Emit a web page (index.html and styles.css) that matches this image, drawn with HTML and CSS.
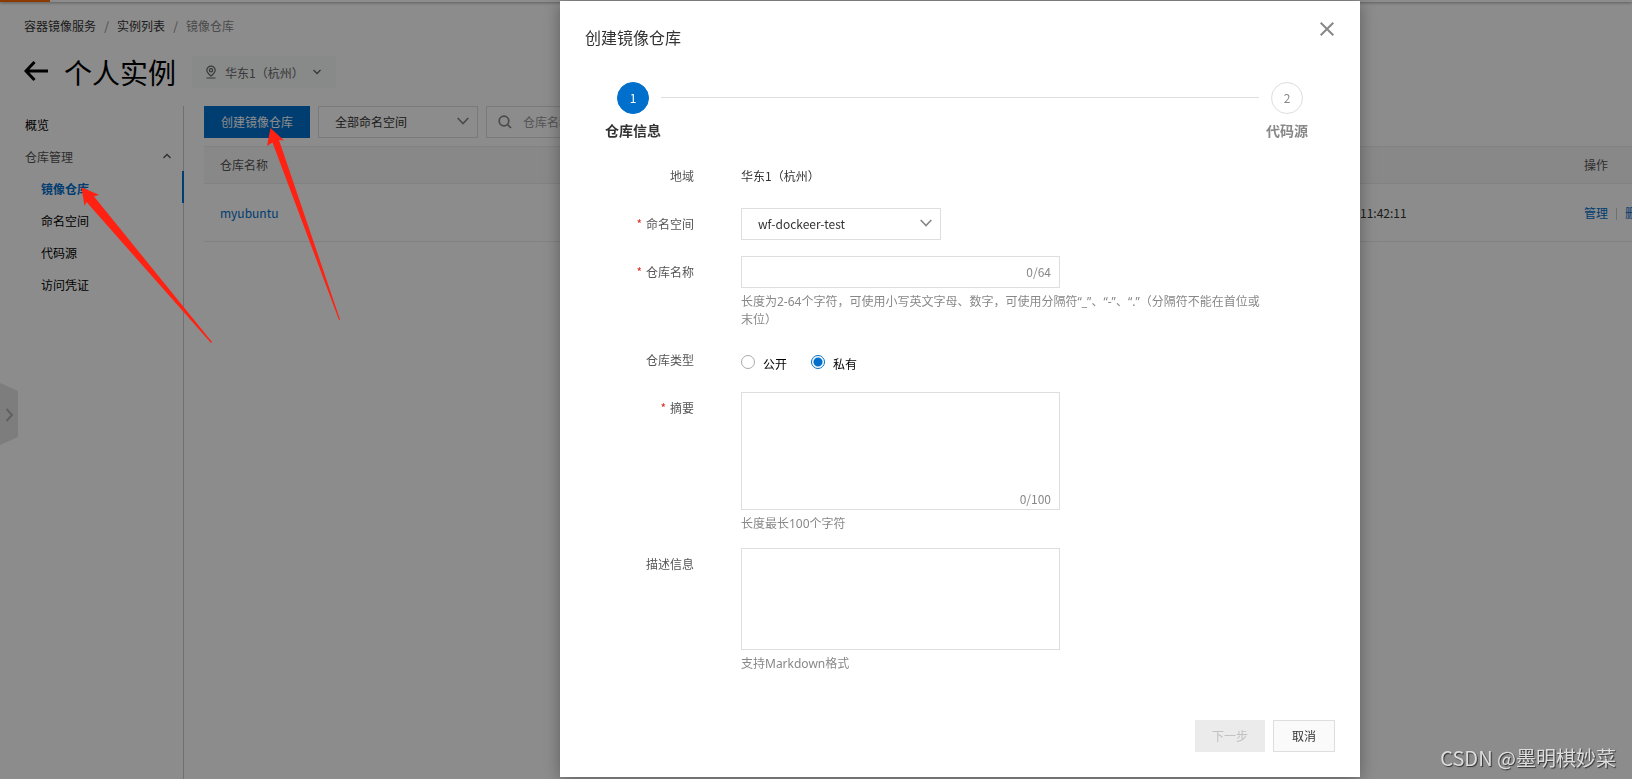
FILE: index.html
```html
<!DOCTYPE html>
<html lang="zh-CN">
<head>
<meta charset="utf-8">
<title>容器镜像服务</title>
<link rel="stylesheet" href="styles.css">
</head>
<body>
<div class="page">
  <div class="topbar"><span class="topbar-accent"></span></div>
  <header class="page-header">
    <nav class="breadcrumb" aria-label="路径">
      <a href="#">容器镜像服务</a><span class="slash">/</span><a href="#">实例列表</a><span class="slash">/</span><span class="current">镜像仓库</span>
    </nav>
    <div class="title-row">
      <a class="back" href="#" aria-label="返回">
        <svg width="24" height="22" viewBox="0 0 24 22" fill="none" stroke="currentColor" stroke-width="3"><path d="M10.500 1L2 10L10.500 19M2 10H24"/></svg>
      </a>
      <h1>个人实例</h1>
      <button class="region" type="button">
        <svg width="12" height="14" viewBox="0 0 12 14" fill="none" stroke="currentColor" stroke-width="1.200"><path d="M6 11C3 8.500 1.800 7.300 1.800 5.300a4.200 4.200 0 0 1 8.400 0C10.200 7.300 9 8.500 6 11zM1.500 13h9"/><circle cx="6" cy="5.300" r="1.600"/></svg>
        <span>华东1（杭州）</span>
        <svg class="region-arrow" width="8" height="6" viewBox="0 0 8 6" fill="none" stroke="currentColor" stroke-width="1.300"><path d="M.5 1L4 4.500L7.500 1"/></svg>
      </button>
    </div>
  </header>
  <div class="body">
    <aside class="sidebar">
      <a class="item strong" href="#">概览</a>
      <button class="item group" type="button">仓库管理
        <svg width="8" height="8" viewBox="0 0 8 8" fill="none" stroke="currentColor" stroke-width="1.300"><path d="M.5 5L4 1.500L7.500 5"/></svg>
      </button>
      <a class="item sub active" href="#">镜像仓库</a>
      <a class="item sub" href="#">命名空间</a>
      <a class="item sub" href="#">代码源</a>
      <a class="item sub" href="#">访问凭证</a>
    </aside>
    <main class="main">
      <div class="toolbar">
        <button class="btn primary" type="button">创建镜像仓库</button>
        <div class="select filter">
          <select aria-label="命名空间筛选"><option>全部命名空间</option></select>
          <svg width="12" height="8" viewBox="0 0 12 8" fill="none" stroke="currentColor" stroke-width="1.700"><path d="M.7 1L6 6.500L11.300 1"/></svg>
        </div>
        <label class="search">
          <svg width="14" height="14" viewBox="0 0 14 14" fill="none" stroke="currentColor" stroke-width="1.700"><circle cx="6" cy="6" r="4.800"/><path d="M9.500 9.500L13 13"/></svg>
          <input type="text" placeholder="仓库名称" aria-label="仓库名称">
        </label>
      </div>
      <table class="repos">
        <colgroup><col><col class="col-time"><col class="col-op"></colgroup>
        <thead><tr><th>仓库名称</th><th></th><th>操作</th></tr></thead>
        <tbody><tr><td><a href="#">myubuntu</a></td><td class="time">11:42:11</td><td class="ops"><a href="#">管理</a><span class="bar"></span><a href="#">删除</a></td></tr></tbody>
      </table>
    </main>
  </div>
  <svg class="handle" width="18" height="62" viewBox="0 0 18 62"><path d="M0 0L18 8V54L0 62z" fill="#e3e3e3"/><path d="M6.500 26L12 32L6.500 38" fill="none" stroke="#b0b0b0" stroke-width="2"/></svg>
</div>

<div class="overlay">
  <form class="dialog" role="dialog" aria-labelledby="dialog-title">
    <div class="dialog-head">
      <h2 id="dialog-title">创建镜像仓库</h2>
      <button class="close" type="button" aria-label="关闭">
        <svg width="14" height="14" viewBox="0 0 14 14" fill="none" stroke="currentColor" stroke-width="2"><path d="M.7 .7L13.300 13.300M13.300 .7L.7 13.300"/></svg>
      </button>
    </div>
    <div class="steps">
      <div class="step on"><span class="num">1</span><span class="step-name">仓库信息</span></div>
      <span class="step-line"></span>
      <div class="step"><span class="num">2</span><span class="step-name">代码源</span></div>
    </div>
    <div class="fields">
      <span class="label">地域</span>
      <div class="value">华东1（杭州）</div>

      <label class="label required" for="ns">命名空间</label>
      <div class="select ns">
        <select id="ns"><option>wf-dockeer-test</option></select>
        <svg width="12" height="8" viewBox="0 0 12 8" fill="none" stroke="currentColor" stroke-width="1.700"><path d="M.7 1L6 6.500L11.300 1"/></svg>
      </div>

      <label class="label required" for="name">仓库名称</label>
      <div>
        <div class="counted"><input id="name" type="text"><span class="count">0/64</span></div>
        <p class="help">长度为2-64个字符，可使用小写英文字母、数字，可使用分隔符“_”、“-”、“.”（分隔符不能在首位或末位）</p>
      </div>

      <span class="label">仓库类型</span>
      <div class="radios">
        <label><input type="radio" name="type">公开</label>
        <label><input type="radio" name="type" checked>私有</label>
      </div>

      <label class="label required" for="summary">摘要</label>
      <div>
        <div class="counted"><textarea id="summary" class="tall"></textarea><span class="count low">0/100</span></div>
        <p class="help">长度最长100个字符</p>
      </div>

      <label class="label" for="desc">描述信息</label>
      <div>
        <div class="counted"><textarea id="desc"></textarea></div>
        <p class="help">支持Markdown格式</p>
      </div>
    </div>
    <div class="dialog-foot">
      <button class="btn disabled" type="button" disabled>下一步</button>
      <button class="btn plain" type="button">取消</button>
    </div>
  </form>
</div>

<svg class="arrows" width="360" height="360" viewBox="0 0 360 360" fill="#ff2212" aria-hidden="true">
  <path d="M81.500 187.500L99 194.700L94 196.500L212 342L211 343L86.500 202L84.500 206z"/>
  <path d="M270.500 128L284 140.500L279 140L340 319.500L339 320L272.500 142.500L267 146z"/>
</svg>
<div class="watermark">CSDN @墨明棋妙菜</div>
</body>
</html>
```

FILE: styles.css
```css
* { box-sizing: border-box; }

body {
  margin: 0;
  min-height: 100vh;
  overflow: hidden;
  background: #fff;
  color: #333;
  font: 12px/18px "Noto Sans CJK SC", sans-serif;
}

a { color: inherit; text-decoration: none; }
button, input, select, textarea { font: inherit; color: inherit; margin: 0; }
h1, h2, p { margin: 0; font-weight: 400; }
svg { display: block; flex: none; }

.page { position: relative; min-height: 100vh; display: flex; flex-direction: column; }

.topbar { height: 2px; background: #fff; box-shadow: 0 1px 3px rgba(0, 0, 0, .4); }
.topbar-accent { display: block; width: 50px; height: 2px; background: #ff6a00; }

.page-header { padding: 14px 24px 18px; }
.breadcrumb { line-height: 20px; color: #888; }
.breadcrumb a { color: #333; }
.slash { display: inline-block; width: 21px; text-align: center; }
.title-row { display: flex; align-items: center; height: 32px; margin-top: 20px; color: #000; }
h1 { margin-left: 16px; font-size: 28px; line-height: 32px; }
.region {
  display: flex; align-items: center; width: 144px; height: 32px; margin-left: 16px; padding: 0 15px 0 13px;
  border: 0; border-radius: 2px; background: #f7f9fa; color: #666;
}
.region span { margin-left: 8px; padding-top: 2px; white-space: nowrap; }
.region-arrow { margin-left: auto; }

.body { flex: 1; display: flex; }
.sidebar { width: 184px; padding-top: 1px; border-right: 1px solid #ccc; }
.item {
  display: flex; align-items: center; justify-content: space-between; position: relative;
  width: 100%; height: 32px; padding: 4px 12px 0 25px; border: 0; background: none; color: #000;
}
.item.group { color: #555; }
.item.sub { padding-left: 41px; }
.item.active { color: #0070cc; font-weight: 700; }
.item.active::after { content: ""; position: absolute; top: 0; right: -1px; width: 2px; height: 32px; background: #0070cc; }

.main { flex: 1; min-width: 0; padding-left: 20px; }
.toolbar { display: flex; gap: 8px; margin-bottom: 8px; }
.btn { height: 32px; padding: 0 15px; border: 1px solid transparent; white-space: nowrap; }
.primary { width: 106px; background: #0070cc; color: #fff; }
.select { position: relative; height: 32px; color: #333; }
.select select {
  appearance: none; width: 100%; height: 32px; padding: 0 32px 0 16px;
  border: 1px solid #dedede; border-radius: 0; background: #fff;
}
.select svg { position: absolute; right: 9px; top: 11px; color: #888; pointer-events: none; }
.filter { width: 160px; }
.search { display: flex; align-items: center; gap: 11px; width: 320px; height: 32px; padding: 0 11px; border: 1px solid #dedede; color: #888; }
.search input { width: 100%; padding: 0; border: 0; background: none; outline: 0; }
.search input::placeholder { color: #999; opacity: 1; }

.repos { width: 100%; table-layout: fixed; border-collapse: collapse; text-align: left; white-space: nowrap; }
.col-time { width: 208px; }
.col-op { width: 64px; }
.repos th, .repos td { padding: 0 16px; border: 0 solid #ebebeb; border-width: 1px 0; font-weight: 400; }
.repos th { height: 37px; background: #f8f8f8; color: #555; }
.repos td { height: 58px; }
.repos td a { color: #0070cc; }
.repos .time { padding-left: 0; }
.bar { display: inline-block; width: 1px; height: 12px; margin: 0 8px; background: #ccc; vertical-align: middle; }

.handle { position: absolute; left: 0; top: 383px; }

.overlay {
  position: fixed; inset: 0; display: flex; justify-content: flex-end; align-items: flex-start;
  padding: 1px 272px 2px; background: rgba(0, 0, 0, .45);
}
.dialog {
  display: flex; flex-direction: column; width: 800px; min-height: 100%; padding: 0 24px 25px;
  background: #fff; box-shadow: 0 2px 16px rgba(0, 0, 0, .35);
}
.dialog-head { display: flex; justify-content: space-between; height: 81px; }
.dialog-head h2 { margin-top: 23px; padding-left: 1px; font-size: 16px; line-height: 26px; }
.close { width: 30px; height: 30px; margin: 13px -6px 0 0; padding: 8px; border: 0; background: none; color: #888; }

.steps { display: flex; padding: 0 21px; }
.step { display: flex; flex-direction: column; align-items: center; width: 56px; color: #888; }
.num { display: flex; align-items: center; justify-content: center; width: 32px; height: 32px; border: 1px solid #dedede; border-radius: 50%; }
.step-name { margin-top: 6px; font-size: 14px; line-height: 20px; font-weight: 700; }
.on { color: #333; }
.on .num { border-color: #0070cc; background: #0070cc; color: #fff; }
.step-line { flex: 1; height: 1px; margin-top: 15px; background: #dedede; }

.fields { display: grid; grid-template-columns: 110px minmax(0, 528px); gap: 16px 47px; margin-top: 20px; }
.label { line-height: 32px; height: 32px; text-align: right; color: #555; }
.required::before { content: "*"; margin-right: 4px; color: #d93026; }
.value { height: 32px; line-height: 32px; }
.ns { width: 200px; }
.counted { position: relative; width: 319px; }
.counted input, .counted textarea {
  display: block; width: 100%; border: 1px solid #dedede; border-radius: 0; background: #fff; padding: 6px 56px 6px 8px; resize: none; outline: 0;
}
.counted input { height: 32px; }
.counted textarea { height: 102px; }
.counted .tall { height: 118px; }
.count { position: absolute; right: 9px; top: 7px; color: #888; }
.count.low { top: auto; bottom: 2px; }
.help { padding-top: 5px; margin-bottom: -1px; color: #888; font-family: "Noto Sans", "Noto Sans CJK SC", sans-serif; text-spacing-trim: space-all; }
.radios { display: flex; gap: 24px; height: 32px; color: #000; line-height: 40px; }
.radios label { display: flex; }
.radios input { appearance: none; width: 14px; height: 14px; margin: 11px 8px 0 0; border: 1px solid #aaa; border-radius: 50%; background: #fff; }
.radios input:checked { border-color: #0070cc; background: radial-gradient(circle, #0070cc 4px, #fff 5px); }

.dialog-foot { display: flex; justify-content: flex-end; gap: 8px; margin-top: auto; padding-right: 1px; }
.disabled { width: 70px; background: #ebebeb; color: #c1c1c1; }
.plain { width: 62px; border-color: #dedede; background: #fafafa; }

.arrows { position: absolute; left: 0; top: 0; pointer-events: none; }
.watermark {
  position: absolute; right: 16px; bottom: 8px; font-size: 20px; line-height: 26px; color: #ddd;
  text-shadow: 1px 1px 1px #333;
}
```
